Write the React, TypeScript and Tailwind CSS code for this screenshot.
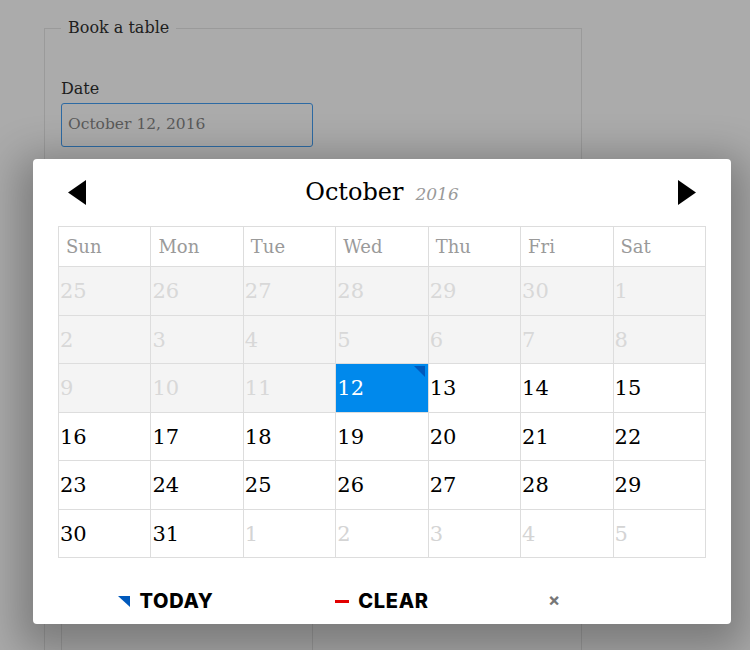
import type { ReactNode } from 'react';

type Day = { n: number; kind: 'off' | 'outside' | 'on' | 'selected' };

const weekdays = ['Sun', 'Mon', 'Tue', 'Wed', 'Thu', 'Fri', 'Sat'];

const weeks: Day[][] = [
    [25, 26, 27, 28, 29, 30, 1].map((n) => ({ n, kind: 'off' as const })),
    [2, 3, 4, 5, 6, 7, 8].map((n) => ({ n, kind: 'off' as const })),
    [
        { n: 9, kind: 'off' },
        { n: 10, kind: 'off' },
        { n: 11, kind: 'off' },
        { n: 12, kind: 'selected' },
        { n: 13, kind: 'on' },
        { n: 14, kind: 'on' },
        { n: 15, kind: 'on' },
    ],
    [16, 17, 18, 19, 20, 21, 22].map((n) => ({ n, kind: 'on' as const })),
    [23, 24, 25, 26, 27, 28, 29].map((n) => ({ n, kind: 'on' as const })),
    [
        { n: 30, kind: 'on' },
        { n: 31, kind: 'on' },
        ...[1, 2, 3, 4, 5].map((n) => ({ n, kind: 'outside' as const })),
    ],
];

function DayCell({ day }: { day: Day }) {
    const base = 'relative h-[48.5px] border border-[#dddddd] pl-[1px] pt-[2px] align-middle text-left text-[21px]';
    if (day.kind === 'selected') {
        return (
            <td className={`${base} bg-[#0089ec] text-white`}>
                {day.n}
                <span className="absolute top-[2px] right-[3px] h-0 w-0 border-t-[11px] border-l-[11px] border-t-[#0059bc] border-l-transparent" />
            </td>
        );
    }
    if (day.kind === 'off') {
        return <td className={`${base} bg-[#f4f4f4] text-[#d8d8d8]`}>{day.n}</td>;
    }
    if (day.kind === 'outside') {
        return <td className={`${base} bg-white text-[#d4d4d4]`}>{day.n}</td>;
    }
    return <td className={`${base} bg-white text-black`}>{day.n}</td>;
}

function FooterButton({ marker, children }: { marker: ReactNode; children: ReactNode }) {
    return (
        <button className="flex items-center justify-center gap-[9px] text-[20px] font-extrabold tracking-[0.7px] text-black">
            {marker}
            {children}
        </button>
    );
}

export default function App() {
    return (
        <div className="relative h-[650px] overflow-hidden bg-[#ababab] font-['DejaVu_Serif',serif]">
            <fieldset className="ml-[44px] mt-[16px] w-[538px] border border-[#9a9a9a] px-[16px] pb-[40px]">
                <legend className="px-[7px] text-[16px] leading-6 text-[#1d1d1d]">Book a table</legend>
                <label className="mt-[37px] block text-[16px] leading-6 text-[#1d1d1d]">Date</label>
                <div className="mt-[2px] flex h-[44px] w-[252px] items-center rounded-[3px] border border-[#2d6aa3] pl-[6px] text-[15.5px] text-[#5a5a5a]">
                    October 12, 2016
                </div>
                <label className="mt-[20px] block text-[16px] leading-6 text-[#1d1d1d]">Time</label>
                <div className="mt-[3px] h-[44px] w-[252px] rounded-[3px] border border-[#9a9a9a]" />
                <label className="mt-[20px] block text-[16px] leading-6 text-[#1d1d1d]">Guests</label>
                <div className="mt-[3px] h-[400px] w-[252px] rounded-[3px] border border-[#9a9a9a]" />
            </fieldset>

            <div className="absolute left-[33px] top-[159px] flex h-[465px] w-[698px] flex-col rounded-[4px] bg-white px-[25px] shadow-[0_12px_40px_14px_rgba(0,0,0,0.28)]">
                <div className="flex h-[67px] items-center justify-between px-[10px]">
                    <svg width="18" height="25" viewBox="0 0 18 25">
                        <polygon points="18,0 18,25 0,12.5" fill="#000" />
                    </svg>
                    <div className="flex items-baseline gap-[12px] pb-[1px]">
                        <span className="text-[24px] text-black">October</span>
                        <span className="text-[17px] italic text-[#999999]">2016</span>
                    </div>
                    <svg width="18" height="25" viewBox="0 0 18 25">
                        <polygon points="0,0 0,25 18,12.5" fill="#000" />
                    </svg>
                </div>

                <table className="w-full table-fixed border-collapse">
                    <thead>
                        <tr>
                            {weekdays.map((d) => (
                                <th
                                    key={d}
                                    className="h-[40px] border border-[#dddddd] pl-[7px] text-left text-[18px] font-normal text-[#9a9a9a]"
                                >
                                    {d}
                                </th>
                            ))}
                        </tr>
                    </thead>
                    <tbody>
                        {weeks.map((week, i) => (
                            <tr key={i}>
                                {week.map((day, j) => (
                                    <DayCell key={j} day={day} />
                                ))}
                            </tr>
                        ))}
                    </tbody>
                </table>

                <div className="grid flex-1 grid-cols-3 items-center pt-[20px] font-['Inter',sans-serif]">
                    <FooterButton
                        marker={
                            <svg width="12" height="11" viewBox="0 0 12 11">
                                <polygon points="0,0 12,0 12,11" fill="#0059bc" />
                            </svg>
                        }
                    >
                        TODAY
                    </FooterButton>
                    <FooterButton marker={<span className="h-[3px] w-[14px] bg-[#e20000]" />}>CLEAR</FooterButton>
                    <div className="pb-[3px] pl-[58px] text-[18px] font-bold text-[#777777]">×</div>
                </div>
            </div>
        </div>
    );
}
